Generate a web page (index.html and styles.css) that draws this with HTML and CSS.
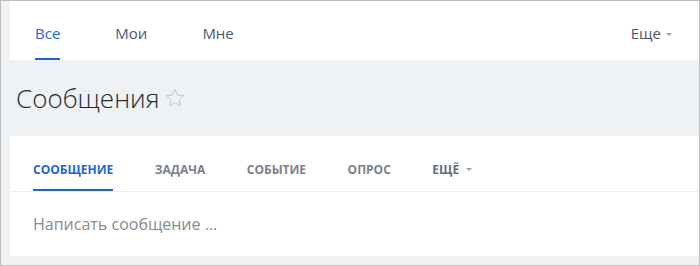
FILE: index.html
```html
<!DOCTYPE html>
<html lang="ru">
<head>
<meta charset="utf-8">
<title>Сообщения</title>
<link rel="stylesheet" href="styles.css">
</head>
<body>
<div class="frame">
  <nav class="topbar">
    <a class="top-item active">Все</a>
    <a class="top-item">Мои</a>
    <a class="top-item">Мне</a>
    <a class="top-item more">Еще <span class="caret"></span></a>
  </nav>
  <div class="title-row">
    <h1 class="title">Сообщения</h1>
    <svg class="star" width="20" height="20" viewBox="0 0 24 24"><polygon points="12,1.8 15.1,8.3 22.2,9.2 17,14.1 18.3,21.2 12,17.8 5.7,21.2 7,14.1 1.8,9.2 8.9,8.3" fill="none" stroke="#c4c8cc" stroke-width="1.2" stroke-linejoin="miter"/></svg>
  </div>
  <section class="card">
    <div class="tabs">
      <a class="tab active">Сообщение</a>
      <a class="tab">Задача</a>
      <a class="tab">Событие</a>
      <a class="tab">Опрос</a>
      <a class="tab more">Ещё <span class="caret"></span></a>
    </div>
    <div class="compose">Написать сообщение ...</div>
  </section>
</div>
</body>
</html>
```
FILE: styles.css
```css
* { box-sizing: border-box; }
html, body { margin: 0; padding: 0; }
body {
  font-family: "Open Sans", "Liberation Sans", sans-serif;
  background: #ffffff;
}
.frame {
  width: 700px;
  height: 266px;
  border: 1px solid #bdbdbd;
  background: #eef2f4;
  padding-left: 9px;
  display: flex;
  flex-direction: column;
}
.topbar {
  height: 59px;
  background: #ffffff;
  display: flex;
  padding-left: 25px;
  padding-right: 27px;
}
.top-item {
  display: flex;
  align-items: flex-start;
  padding-top: 22px;
  height: 59px;
  border-bottom: 2px solid transparent;
  font-size: 15px;
  line-height: 20px;
  color: #4f5966;
  margin-right: 55px;
}
.top-item.active {
  color: #1f64d3;
  border-bottom-color: #1f64d3;
}
.top-item.more {
  margin-left: auto;
  margin-right: 0;
}
.caret {
  display: block;
  width: 0;
  height: 0;
  border-left: 3px solid transparent;
  border-right: 3px solid transparent;
  border-top: 3px solid #9aa0a6;
}
.top-item .caret {
  margin-left: 5px;
  margin-top: 10px;
}
.title-row {
  height: 76px;
  display: flex;
  align-items: center;
  padding-left: 6px;
}
.title {
  margin: 0;
  font-size: 26px;
  font-weight: 300;
  color: #262b33;
  line-height: 34px;
}
.star {
  margin-left: 6px;
  margin-top: -1px;
}
.card {
  height: 120px;
  background: #ffffff;
  display: flex;
  flex-direction: column;
}
.tabs {
  display: flex;
  height: 56px;
  border-bottom: 1px solid #eaecee;
  padding-left: 23px;
}
.tab {
  display: flex;
  align-items: flex-start;
  height: 55px;
  padding-top: 27px;
  border-bottom: 2px solid transparent;
  font-size: 12px;
  line-height: 14px;
  font-weight: 700;
  text-transform: uppercase;
  color: #7b818a;
  margin-right: 41.5px;
}
.tab.active {
  color: #1f64d3;
  border-bottom-color: #1f64d3;
}
.tab.more { color: #646c77; }
.tab .caret { margin-top: 5px; margin-left: 7px; }
.compose {
  flex: 1;
  display: flex;
  align-items: center;
  padding-left: 23px;
  font-size: 16px;
  color: #858b92;
}
```
